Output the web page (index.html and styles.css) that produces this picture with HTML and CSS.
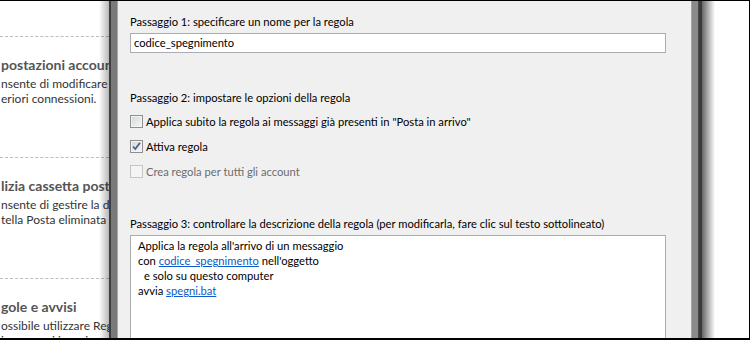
FILE: index.html
```html
<!doctype html>
<html>
  <head>
    <title>Regole e avvisi - Nuova regola</title>
    <meta charset="UTF-8" />
    <link rel="stylesheet" href="styles.css">
  </head>

  <body>
    <div class="screen">
      <!-- account settings page behind the dialog -->
      <div class="backdrop">
        <div class="section">
          <h3>postazioni account</h3>
          <p>nsente di modificare le impostazioni</p>
          <p>eriori connessioni.</p>
        </div>
        <div class="section">
          <h3>lizia cassetta postale</h3>
          <p>nsente di gestire la dimensione</p>
          <p>tella Posta eliminata</p>
        </div>
        <div class="section">
          <h3>gole e avvisi</h3>
          <p>ossibile utilizzare Regole e avvisi</p>
          <p>i messaggi in arrivo</p>
        </div>
      </div>

      <div class="frame-left"></div>

      <div class="dialog">
        <div class="step">Passaggio 1: specificare un nome per la regola</div>
        <div class="textbox">codice_spegnimento</div>

        <div class="step step-2">Passaggio 2: impostare le opzioni della regola</div>
        <div class="options">
          <label class="option">
            <span class="check"></span>
            Applica subito la regola ai messaggi già presenti in "Posta in arrivo"
          </label>
          <label class="option">
            <span class="check checked">
              <svg width="11" height="11" viewBox="0 0 11 11">
                <path d="M2 5.5 L4.3 8 L9 1.8" fill="none" stroke="#44598f" stroke-width="1.7" />
              </svg>
            </span>
            Attiva regola
          </label>
          <label class="option disabled">
            <span class="check"></span>
            Crea regola per tutti gli account
          </label>
        </div>

        <div class="step step-3">Passaggio 3: controllare la descrizione della regola (per modificarla, fare clic sul testo sottolineato)</div>
        <div class="description">
          <div>Applica la regola all'arrivo di un messaggio</div>
          <div>con <a href="#">codice_spegnimento</a> nell'oggetto</div>
          <div class="indent">e solo su questo computer</div>
          <div>avvia <a href="#">spegni.bat</a></div>
        </div>
      </div>

      <div class="frame-right"></div>
      <div class="backdrop-right"></div>
    </div>
  </body>
</html>
```

FILE: styles.css
```css
html,
body {
  margin: 0;
  padding: 0;
}
body {
  font: 400 11.2px/15px Lato, 'Liberation Sans', sans-serif;
  color: #000000;
  background: #ffffff;
}
.screen {
  box-sizing: border-box;
  width: 750px;
  height: 340px;
  display: flex;
  overflow: hidden;
  border-top: 1px solid #000000;
  border-right: 1px solid #000000;
  border-bottom: 2px solid #000000;
}

/* page behind the dialog */
.backdrop {
  position: relative;
  width: 109px;
  flex: none;
  overflow: hidden;
  white-space: nowrap;
  padding-top: 35px;
  background: #ffffff;
}
.backdrop::after {
  content: '';
  position: absolute;
  top: 0;
  bottom: 0;
  right: 0;
  width: 10px;
  background: linear-gradient(90deg, rgba(0, 0, 0, 0), rgba(0, 0, 0, 0.28));
}
.section {
  border-top: 1px dashed #bdbdbd;
  height: 120px;
}
.section h3 {
  margin: 18px 0 1px 1px;
  font-size: 14px;
  line-height: 20px;
  font-weight: 700;
  color: #555555;
}
.section p {
  margin: 0 0 0 1px;
  font-size: 12px;
  line-height: 15px;
  color: #333333;
}

/* dialog window frame */
.frame-left {
  width: 9px;
  flex: none;
  background: linear-gradient(
    90deg,
    #3f3f3f 0,
    #3f3f3f 2px,
    #7a7a7a 2px,
    #7a7a7a 8px,
    #a8a8a8 8px
  );
}
.frame-right {
  width: 11px;
  flex: none;
  background: linear-gradient(
    90deg,
    #a4a4a4 0,
    #a4a4a4 1px,
    #8a8a8a 1px,
    #8a8a8a 7px,
    #5a5a5a 7px,
    #3b3b3b 8px
  );
}
.backdrop-right {
  flex: 1;
  background: linear-gradient(90deg, rgba(0, 0, 0, 0.6), rgba(0, 0, 0, 0) 13px), #ffffff;
}

/* dialog content */
.dialog {
  width: 573px;
  flex: none;
  box-sizing: border-box;
  padding: 13px 25px 0 12px;
  background: #f0f0f0;
}
.step {
  white-space: nowrap;
}
.textbox {
  margin-top: 4px;
  height: 18px;
  line-height: 18px;
  padding: 0 3px;
  border: 1px solid #abadb3;
  background: #ffffff;
}
.step-2 {
  margin-top: 37px;
}
.options {
  margin-top: 9px;
  display: flex;
  flex-direction: column;
  gap: 10px;
}
.option {
  display: flex;
  align-items: center;
  gap: 3px;
  white-space: nowrap;
}
.option.disabled {
  color: #6d6d6d;
}
.check {
  box-sizing: border-box;
  width: 13px;
  height: 13px;
  flex: none;
  display: flex;
  align-items: center;
  justify-content: center;
  border: 1px solid #8e8f8f;
  background: linear-gradient(135deg, #d3d6db, #f7f7f7);
  box-shadow: inset 0 0 0 1px #f4f4f4;
}
.option.disabled .check {
  border-color: #c5c5c5;
  background: #f4f4f4;
  box-shadow: none;
}
.step-3 {
  margin-top: 37px;
}
.description {
  margin-top: 4px;
  height: 120px;
  padding: 2px 7px;
  border: 1px solid #abadb3;
  border-bottom: 0;
  background: #ffffff;
}
.description .indent {
  padding-left: 6px;
}
.description a {
  color: #0b5bc9;
}
```
